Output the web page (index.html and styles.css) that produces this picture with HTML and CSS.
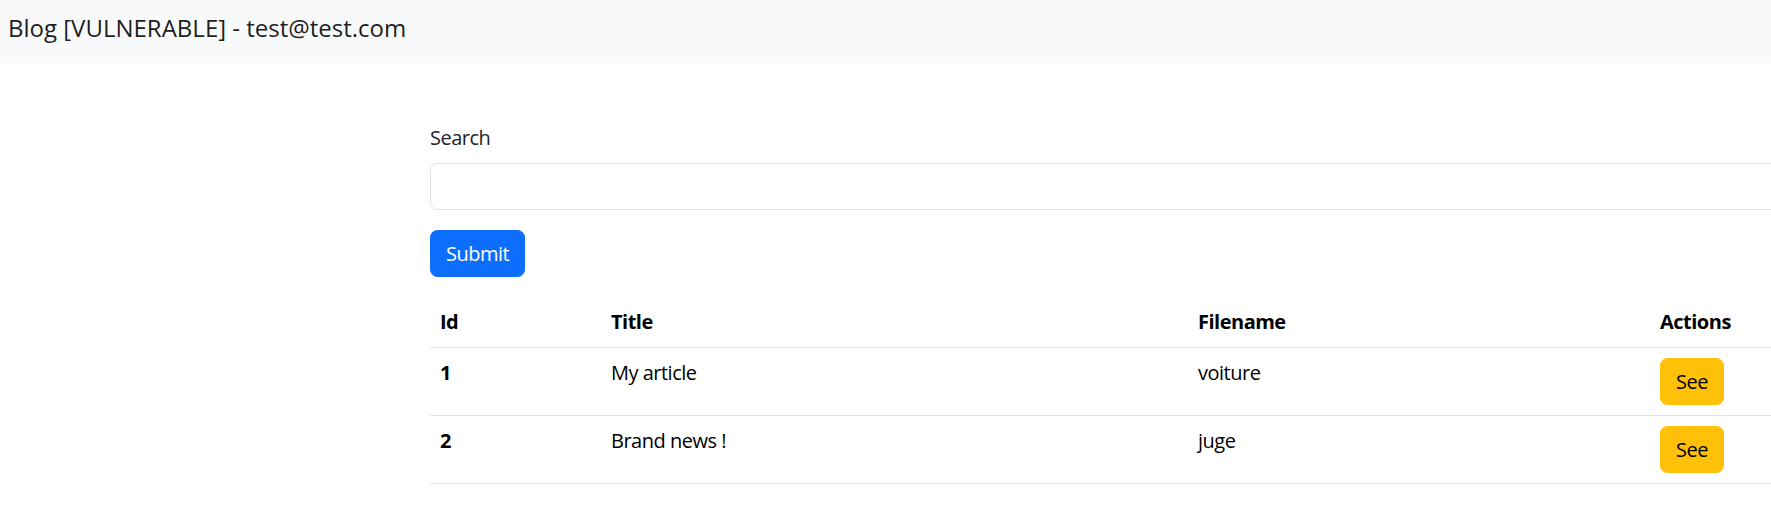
FILE: index.html
```html
<!DOCTYPE html>
<html lang="en">
<head>
<meta charset="utf-8">
<title>Blog [VULNERABLE]</title>
<link rel="stylesheet" href="styles.css">
</head>
<body>
<nav class="navbar">
  <span class="brand">Blog [VULNERABLE] - test@test.com</span>
</nav>
<main class="container">
  <form class="search-form">
    <label class="form-label" for="q">Search</label>
    <input class="form-control" id="q" type="text">
    <button class="btn btn-primary" type="button">Submit</button>
  </form>
  <table class="table">
    <colgroup>
      <col class="c-id"><col class="c-title"><col class="c-file"><col class="c-actions">
    </colgroup>
    <thead>
      <tr><th>Id</th><th>Title</th><th>Filename</th><th>Actions</th></tr>
    </thead>
    <tbody>
      <tr><th>1</th><td>My article</td><td>voiture</td><td><button class="btn btn-warning" type="button">See</button></td></tr>
      <tr><th>2</th><td>Brand news !</td><td>juge</td><td><button class="btn btn-warning" type="button">See</button></td></tr>
    </tbody>
  </table>
</main>
</body>
</html>
```
FILE: styles.css
```css
html, body {
  margin: 0;
  padding: 0;
  overflow: hidden;
  background: #fff;
}
body {
  font-family: "Segoe UI", "Open Sans", "Noto Sans", sans-serif;
  font-size: 20px;
  line-height: 1.5;
  letter-spacing: -0.5px;
  color: #212529;
}
.navbar {
  height: 63px;
  box-sizing: border-box;
  background: #f8f9fa;
  padding: 9px 0 0 8px;
}
.brand {
  font-size: 24px;
  line-height: 37.5px;
  letter-spacing: 0;
  color: rgba(0, 0, 0, 0.9);
  white-space: nowrap;
}
.container {
  margin: 60px 0 0 430px;
  width: 1620px;
}
.search-form {
  display: flex;
  flex-direction: column;
  align-items: flex-start;
}
.form-label {
  margin-bottom: 10px;
  line-height: 30px;
}
.form-control {
  box-sizing: border-box;
  width: 100%;
  height: 47px;
  border: 1px solid #dee2e6;
  border-radius: 7.5px;
  padding: 7.5px 15px;
  font: inherit;
  margin: 0 0 20px;
  background: #fff;
}
.btn {
  box-sizing: border-box;
  font: inherit;
  letter-spacing: inherit;
  line-height: 30px;
  height: 47px;
  padding: 7.5px 15px;
  border: 1px solid transparent;
  border-radius: 7.5px;
  cursor: pointer;
}
.btn-primary {
  background: #0d6efd;
  border-color: #0d6efd;
  color: #fff;
}
.btn-warning {
  background: #ffc107;
  border-color: #ffc107;
  color: #000;
}
.table {
  margin-top: 20px;
  width: 1620px;
  border-collapse: collapse;
  table-layout: fixed;
}
.c-id { width: 171px; }
.c-title { width: 587px; }
.c-file { width: 462px; }
.c-actions { width: 400px; }
.table th, .table td {
  padding: 10px;
  text-align: left;
  vertical-align: top;
  border-bottom: 1px solid #dee2e6;
  line-height: 30px;
}
.table th {
  font-weight: 700;
  color: #000;
}
.table td {
  color: #000;
}
```
